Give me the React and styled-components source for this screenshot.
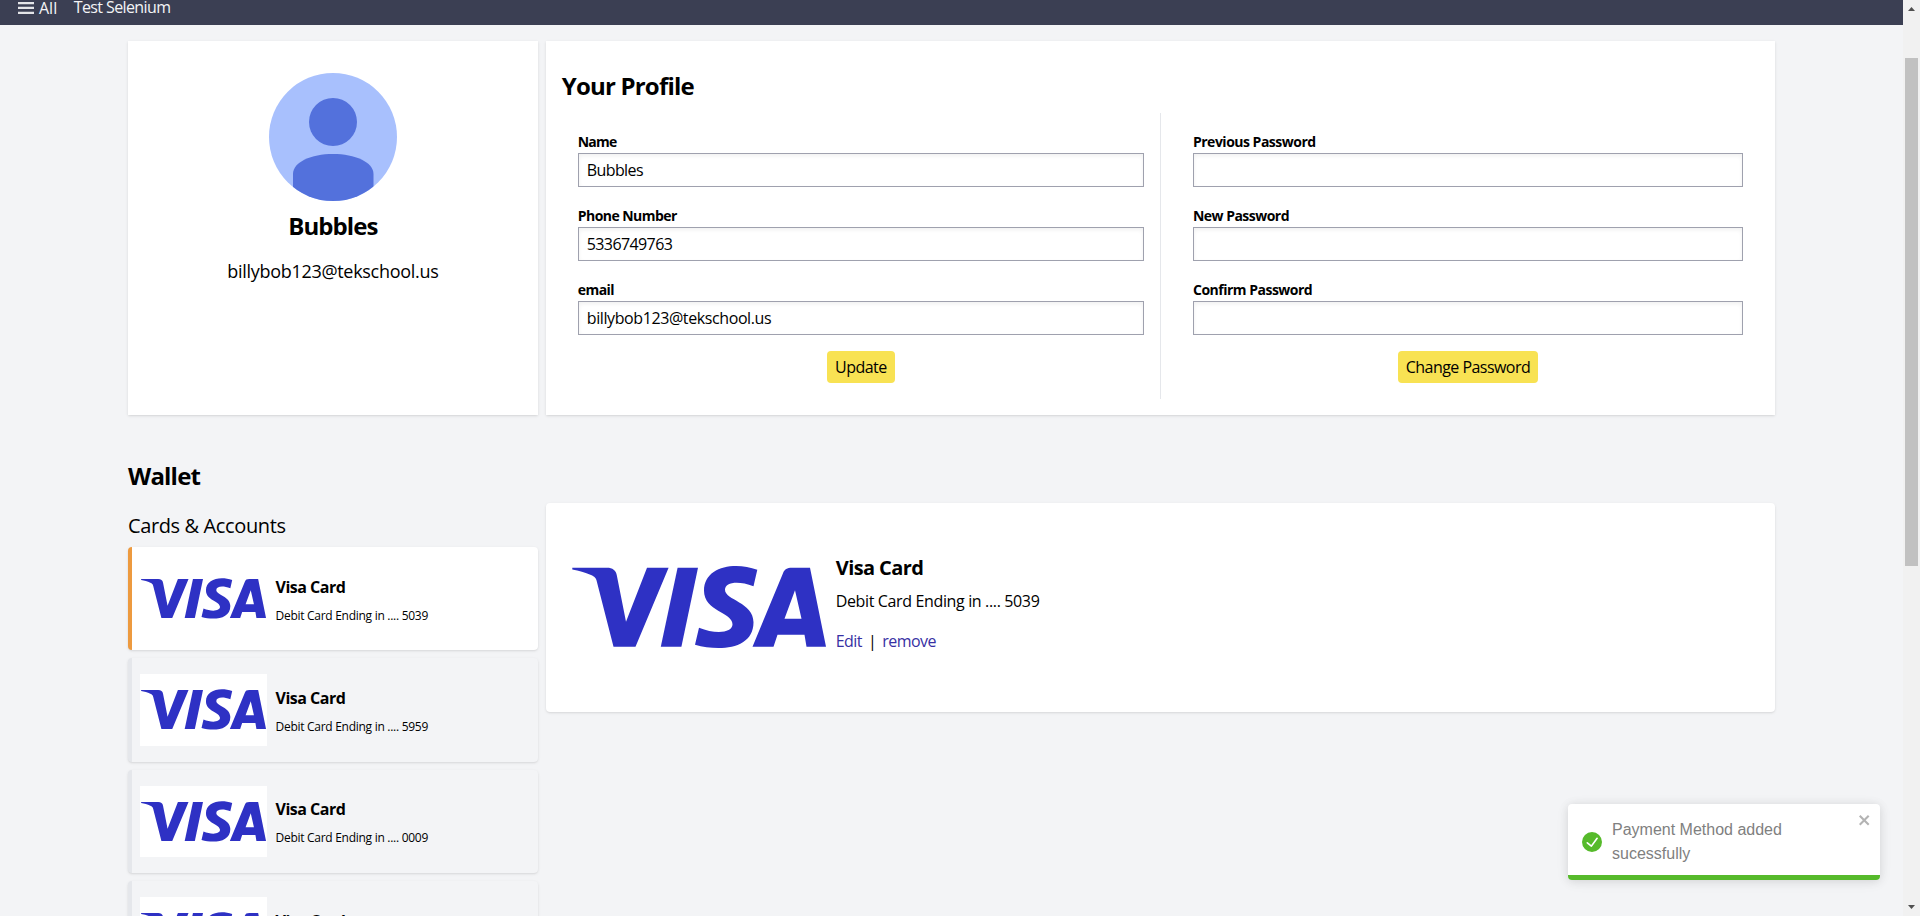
import React from "react";
import styled, { createGlobalStyle } from "styled-components";

const Global = createGlobalStyle`
  *, *::before, *::after { box-sizing: border-box; }
  html, body { margin: 0; height: 916px; overflow: hidden; background: #f3f4f6; }
  body { font-family: "Open Sans", "Noto Sans", sans-serif; font-size: 16px; line-height: 24px; color: #000; }
  h1, h2, h3, p { margin: 0; }
`;

const cardShadow = "0 1px 3px 0 rgba(0,0,0,0.1), 0 1px 2px -1px rgba(0,0,0,0.1)";

const Screen = styled.div`
  display: flex;
  width: 1920px;
  height: 916px;
  overflow: hidden;
`;
const Page = styled.div`
  width: 1903px;
  height: 916px;
  overflow: hidden;
`;
const Text = styled.span`
  display: inline-block;
  white-space: nowrap;
  letter-spacing: ${(p) => p.$track || 0}px;
`;
const NavBar = styled.nav`
  height: 25px;
  padding: 0 18px;
  display: flex;
  align-items: flex-start;
  background: #3b3f53;
  color: #f3f4f6;
  line-height: 16px;
`;
const NavLink = styled(Text)`
  line-height: 15px;
`;
const MenuButton = styled.div`
  display: flex;
  align-items: center;
  gap: 5px;
  margin-right: 16.5px;
`;
const MenuIcon = styled.svg`
  display: block;
  width: 16px;
  height: 16px;
`;
const Content = styled.main`
  padding: 16px 128px 0;
`;
const Columns = styled.div`
  display: grid;
  grid-template-columns: 1fr 3fr;
  column-gap: 8px;
`;
const Panel = styled.section`
  height: 374px;
  background: #fff;
  box-shadow: ${cardShadow};
`;
const UserPanel = styled(Panel)`
  display: flex;
  flex-direction: column;
  align-items: center;
  padding-top: 32px;
`;
const Avatar = styled.svg`
  display: block;
  width: 128px;
  height: 128px;
`;
const UserName = styled.h2`
  margin-top: 9px;
  font-size: 24px;
  line-height: 32px;
  font-weight: 700;
`;
const UserEmail = styled.p`
  margin-top: 15px;
  font-size: 18px;
  line-height: 28px;
  font-weight: 500;
`;
const ProfilePanel = styled(Panel)`
  padding: 29px 16px 16px;
`;
const Heading = styled.h1`
  font-size: 24px;
  line-height: 32px;
  font-weight: 700;
`;
const Forms = styled.div`
  display: grid;
  grid-template-columns: calc(50% + 0.6px) 1fr;
  height: 286px;
  margin-top: 11px;
`;
const Form = styled.div`
  display: flex;
  flex-direction: column;
  align-items: center;
  padding: 16px 16px 16px ${(p) => (p.$last ? 32 : 16)}px;
  border-right: ${(p) => (p.$last ? "none" : "1px solid #e5e7eb")};
`;
const Field = styled.label`
  display: block;
  width: 100%;
  height: 74px;
  padding-top: 3px;
`;
const FieldLabel = styled.div`
  margin-bottom: 1px;
  font-size: 14px;
  line-height: 20px;
  font-weight: 700;
`;
const Input = styled.input`
  display: block;
  width: 100%;
  height: 34px;
  padding: 0 8px;
  border: 1px solid #9fa1ae;
  border-radius: 0;
  background: #fff;
  box-shadow: inset 0 2px 4px 0 rgba(0,0,0,0.06);
  font: inherit;
  color: #000;
  letter-spacing: ${(p) => p.$track || 0}px;
`;
const Button = styled.button`
  width: ${(p) => p.$width}px;
  height: 32px;
  padding: 0;
  border: 0;
  border-radius: 4px;
  background: #f8e253;
  font: inherit;
  color: #000;
`;
const WalletTitle = styled(Heading)`
  margin-top: 45px;
`;
const WalletColumns = styled(Columns)`
  margin-top: 11px;
  align-items: start;
`;
const ListTitle = styled.h2`
  padding-top: 9px;
  margin-bottom: 7px;
  font-size: 20px;
  line-height: 28px;
  font-weight: 400;
`;
const CardRow = styled.div`
  display: flex;
  align-items: center;
  height: 103.3px;
  margin-bottom: 8px;
  padding: 0 8px;
  border-left: 4px solid ${(p) => (p.$active ? "#ed9a3f" : "#e5e7eb")};
  border-radius: 4px;
  background: ${(p) => (p.$active ? "#fff" : "#f3f4f6")};
  box-shadow: ${cardShadow};
`;
const CardInfo = styled.div`
  margin-left: 8.5px;
  padding-top: 1px;
`;
const CardTitle = styled.h3`
  font-size: ${(p) => (p.$big ? 20 : 16)}px;
  line-height: ${(p) => (p.$big ? 28 : 24)}px;
  font-weight: 700;
`;
const CardText = styled.p`
  margin-top: ${(p) => (p.$big ? 7 : 9)}px;
  font-size: ${(p) => (p.$big ? 16 : 12)}px;
  line-height: ${(p) => (p.$big ? 24 : 16)}px;
`;
const Detail = styled.section`
  display: flex;
  height: 209px;
  padding: 32px 24px;
  border-radius: 4px;
  background: #fff;
  box-shadow: ${cardShadow};
`;
const DetailInfo = styled.div`
  margin-left: 8px;
  padding-top: 19px;
`;
const Actions = styled.div`
  display: flex;
  margin-top: 16px;
  gap: 6px;
  letter-spacing: -0.55px;
`;
const Action = styled.span`
  color: #3730a3;
`;
const Logo = styled.svg`
  display: block;
  flex: none;
  width: ${(p) => p.$width}px;
  height: ${(p) => p.$height}px;
  background: #fff;
`;
const ScrollTrack = styled.div`
  width: 17px;
  height: 916px;
  background: #f1f1f1;
  display: flex;
  flex-direction: column;
  align-items: center;
`;
const Arrow = styled.svg`
  display: block;
  width: 17px;
  height: 17px;
`;
const Thumb = styled.div`
  width: 13px;
  height: 508px;
  margin: 41px 0 auto;
  background: #c1c1c1;
`;
const Toast = styled.div`
  position: absolute;
  left: 1568px;
  top: 804px;
  width: 312px;
  height: 76px;
  border-radius: 4px;
  overflow: hidden;
  background: #fff;
  color: #808080;
  display: flex;
  align-items: center;
  padding: 0 8px 5px 14px;
  font-family: "Liberation Sans", Arial, sans-serif;
  box-shadow: 0 1px 10px 0 rgba(0,0,0,0.1), 0 2px 15px 0 rgba(0,0,0,0.05);
`;
const ToastIcon = styled.svg`
  flex: none;
  width: 20px;
  height: 20px;
  margin: 5px 10px 0 0;
`;
const ToastMessage = styled.div`
  width: 220px;
  margin-top: 4px;
`;
const ToastClose = styled.svg`
  align-self: flex-start;
  margin: 8px 0 0 auto;
  flex: none;
  width: 14px;
  height: 16px;
`;
const ToastBar = styled.div`
  position: absolute;
  left: 0;
  right: 0;
  bottom: 0;
  height: 5px;
  background: #56ba2b;
`;

const Visa = ({ width, height }) => (
  <Logo $width={width} $height={height} viewBox="0 0 258 145" preserveAspectRatio="none" fill="#2e31c4">
    <g transform="translate(0 1.2)">
      <path d="M2.300 31.500H37C42.500 31.500 46 34 46.800 39L56 85.500L77 31.500H98.600L65.500 110.500H43.500L27 46C26 41.500 24.500 40.500 21 38.900C15 36 9 34.500 2.300 33.300Z" />
      <path d="M107.600 31.500H128L111.400 110.500H90.800Z" />
      <path d="M187.300 33.500L183.500 50C168 44 155 46 155 53.500C155 64 183.500 66 183.500 86C183.500 113 150 115.500 125 108.500L129 91.500C145 98 162.500 97 162.500 88C162.500 76 134 75 134 54.500C134 30.500 164 25 187.300 33.500Z" />
      <path fillRule="evenodd" d="M222 31.500H240L256 110.500H236.500L234.500 98.500H207.500L203.500 110.500H182.500L213 37C214.500 33 217 31.500 222 31.500ZM225 54L214.500 82.500H231.500Z" />
    </g>
  </Logo>
);

const cards = ["5039", "5959", "0009", "0009"];

export default function App() {
  return (
    <>
      <Global />
      <Screen>
        <Page>
          <NavBar>
            <MenuButton>
              <MenuIcon viewBox="0 0 16 16" fill="#e4e5e8"><path d="M0 2h16v2.300H0zM0 6.800h16v2.300H0zM0 11.700h16v2.300H0z" /></MenuIcon>
              <Text>All</Text>
            </MenuButton>
            <NavLink $track={-0.6}>Test Selenium</NavLink>
          </NavBar>
          <Content>
            <Columns>
              <UserPanel>
                <Avatar viewBox="0 0 128 128">
                  <defs><clipPath id="face"><circle cx="64" cy="64" r="64" /></clipPath></defs>
                  <g clipPath="url(#face)">
                    <rect width="128" height="128" fill="#a8c0fd" />
                    <circle cx="64" cy="49" r="24" fill="#5371dc" />
                    <path d="M24 128V101C24 89 42 81 64 81S104.500 89 104.500 101V128Z" fill="#5371dc" />
                  </g>
                </Avatar>
                <UserName><Text $track={-0.95}>Bubbles</Text></UserName>
                <UserEmail><Text $track={-0.3}>billybob123@tekschool.us</Text></UserEmail>
              </UserPanel>
              <ProfilePanel>
                <Heading><Text $track={-0.8}>Your Profile</Text></Heading>
                <Forms>
                  <Form>
                    <Field><FieldLabel><Text $track={-0.8}>Name</Text></FieldLabel><Input $track={-0.6} defaultValue="Bubbles" /></Field>
                    <Field><FieldLabel><Text $track={-0.55}>Phone Number</Text></FieldLabel><Input $track={-0.6} defaultValue="5336749763" /></Field>
                    <Field><FieldLabel><Text $track={-0.55}>email</Text></FieldLabel><Input $track={-0.4} defaultValue="billybob123@tekschool.us" /></Field>
                    <Button $width={68}><Text $track={-0.55}>Update</Text></Button>
                  </Form>
                  <Form $last>
                    <Field><FieldLabel><Text $track={-0.5}>Previous Password</Text></FieldLabel><Input type="password" /></Field>
                    <Field><FieldLabel><Text $track={-0.52}>New Password</Text></FieldLabel><Input type="password" /></Field>
                    <Field><FieldLabel><Text $track={-0.5}>Confirm Password</Text></FieldLabel><Input type="password" /></Field>
                    <Button $width={140}><Text $track={-0.55}>Change Password</Text></Button>
                  </Form>
                </Forms>
              </ProfilePanel>
            </Columns>
            <WalletTitle><Text $track={-0.8}>Wallet</Text></WalletTitle>
            <WalletColumns>
              <div>
                <ListTitle><Text $track={-0.38}>Cards &amp; Accounts</Text></ListTitle>
                {cards.map((n, i) => (
                  <CardRow key={i} $active={i === 0}>
                    <Visa width={127} height={71.3} />
                    <CardInfo>
                      <CardTitle><Text $track={-0.5}>Visa Card</Text></CardTitle>
                      <CardText><Text $track={-0.28}>Debit Card Ending in .... {n}</Text></CardText>
                    </CardInfo>
                  </CardRow>
                ))}
              </div>
              <Detail>
                <Visa width={258} height={145} />
                <DetailInfo>
                  <CardTitle $big><Text $track={-0.6}>Visa Card</Text></CardTitle>
                  <CardText $big><Text $track={-0.36}>Debit Card Ending in .... 5039</Text></CardText>
                  <Actions><Action>Edit</Action><span>|</span><Action>remove</Action></Actions>
                </DetailInfo>
              </Detail>
            </WalletColumns>
          </Content>
        </Page>
        <ScrollTrack>
          <Arrow viewBox="0 0 17 17"><path d="M8.500 7L12 11H5Z" fill="#505050" /></Arrow>
          <Thumb />
          <Arrow viewBox="0 0 17 17"><path d="M5 6H12L8.500 10Z" fill="#505050" /></Arrow>
        </ScrollTrack>
      </Screen>
      <Toast>
        <ToastIcon viewBox="0 0 24 24" fill="#56ba2b">
          <path d="M12 0a12 12 0 1012 12A12.014 12.014 0 0012 0zm6.927 8.200l-6.845 9.289a1.011 1.011 0 01-1.430.188l-4.888-3.908a1 1 0 111.250-1.562l4.076 3.261 6.227-8.451a1 1 0 111.610 1.183z" />
        </ToastIcon>
        <ToastMessage>Payment Method added sucessfully</ToastMessage>
        <ToastClose viewBox="0 0 14 16" fill="#b3b3b3">
          <path fillRule="evenodd" d="M7.710 8.230l3.750 3.750-1.480 1.480-3.750-3.750-3.750 3.750L1 11.980l3.750-3.750L1 4.480 2.480 3l3.750 3.750L9.980 3l1.480 1.480-3.750 3.750z" />
        </ToastClose>
        <ToastBar />
      </Toast>
    </>
  );
}
